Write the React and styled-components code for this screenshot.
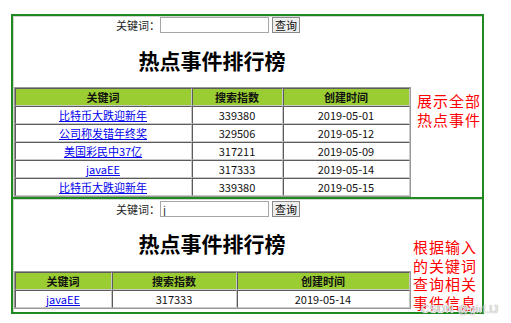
import React from 'react';
import styled, { createGlobalStyle } from 'styled-components';

const GlobalStyle = createGlobalStyle`
  body {
    margin: 0;
    background: #ffffff;
    font-family: "Noto Sans CJK SC", "Noto Sans", sans-serif;
  }
`;

const allEvents = [
  { keyword: '比特币大跌迎新年', index: 339380, date: '2019-05-01' },
  { keyword: '公司称发错年终奖', index: 329506, date: '2019-05-12' },
  { keyword: '美国彩民中37亿', index: 317211, date: '2019-05-09' },
  { keyword: 'javaEE', index: 317333, date: '2019-05-14' },
  { keyword: '比特币大跌迎新年', index: 339380, date: '2019-05-15' },
];

const searchResult = [{ keyword: 'javaEE', index: 317333, date: '2019-05-14' }];

const Page = styled.div`
  position: relative;
  width: 511px;
  height: 323px;
  padding: 14px 0 0 11px;
  box-sizing: border-box;
`;

const Panel = styled.div`
  width: 473px;
  box-sizing: border-box;
  border: 2px solid #1f8a1f;
  border-top-width: ${p => (p.$joined ? '0' : '2px')};
  box-shadow: inset 1px 1px 0 #d4d4d4;
  display: flex;
  padding-left: 1px;
`;

const Main = styled.div`
  width: 396px;
  display: flex;
  flex-direction: column;
  align-items: center;
`;

const SearchRow = styled.div`
  display: flex;
  align-items: center;
  margin-top: ${p => p.$top}px;
  margin-right: 8px;
  font-size: 11px;
  color: #222;
  height: 16px;
`;

const Label = styled.span`
  line-height: 16px;
`;

const Input = styled.input`
  width: 109px;
  height: 16px;
  box-sizing: border-box;
  border: 1px solid #a6a6a6;
  padding: 0 2px;
  font-size: 11px;
  font-family: inherit;
  color: #333;
  outline: none;
`;

const Button = styled.button`
  margin-left: 3px;
  width: 28px;
  height: 16px;
  box-sizing: border-box;
  padding: 0;
  border: 1px solid #8a8a8a;
  border-radius: 0;
  background: #efefef;
  font-size: 11px;
  font-family: inherit;
  line-height: 14px;
  color: #111;
`;

const Title = styled.h1`
  margin: ${p => p.$gap}px 0 ${p => p.$after}px;
  font-size: 21px;
  line-height: 26px;
  font-weight: bold;
  color: #000;
`;

const Table = styled.table`
  width: 395px;
  border-collapse: separate;
  border-spacing: 0;
  border: 1px solid #9a9a9a;
  font-size: 11px;
  table-layout: fixed;
`;

const Th = styled.th`
  background: #9acd32;
  font-weight: bold;
  color: #111;
  height: 16px;
  padding: 0;
  line-height: 16px;
  border: 1px solid;
  border-color: #5c5c5c #c8c8c8 #c8c8c8 #5c5c5c;
`;

const Td = styled.td`
  text-align: center;
  height: 16px;
  padding: 0;
  line-height: 16px;
  color: #111;
  border: 1px solid;
  border-color: #5c5c5c #c8c8c8 #c8c8c8 #5c5c5c;
`;

const Link = styled.a`
  color: #0000ee;
  text-decoration: underline;
`;

const Note = styled.div`
  margin: ${p => p.$top}px 0 0 ${p => p.$left}px;
  color: #ff0000;
  font-size: 15px;
  letter-spacing: 1px;
  line-height: 18.5px;
  white-space: pre-line;
`;

const Watermark = styled.div`
  position: absolute;
  left: 421px;
  top: 303px;
  font-family: "Liberation Sans", Arial, sans-serif;
  font-size: 11px;
  color: rgba(255, 255, 255, 0.85);
  text-shadow: 0 0 1px #999, 0 0 1px #999;
  letter-spacing: 0.5px;
`;

const EventTable = ({ rows, widths }) => (
  <Table>
    <colgroup>
      {widths.map((w, i) => (
        <col key={i} style={{ width: w }} />
      ))}
    </colgroup>
    <thead>
      <tr>
        <Th>关键词</Th>
        <Th>搜索指数</Th>
        <Th>创建时间</Th>
      </tr>
    </thead>
    <tbody>
      {rows.map((r, i) => (
        <tr key={i}>
          <Td>
            <Link href="#">{r.keyword}</Link>
          </Td>
          <Td>{r.index}</Td>
          <Td>{r.date}</Td>
        </tr>
      ))}
    </tbody>
  </Table>
);

const App = () => (
  <Page>
    <GlobalStyle />
    <Panel>
      <Main>
        <SearchRow $top={1}>
          <Label>关键词：</Label>
          <Input defaultValue="" />
          <Button>查询</Button>
        </SearchRow>
        <Title $gap={14} $after={14}>热点事件排行榜</Title>
        <EventTable rows={allEvents} widths={[177, 91, 127]} />
      </Main>
      <Note $top={76} $left={7}>{'展示全部\n热点事件'}</Note>
    </Panel>
    <Panel $joined>
      <Main>
        <SearchRow $top={2}>
          <Label>关键词：</Label>
          <Input defaultValue="j" />
          <Button>查询</Button>
        </SearchRow>
        <Title $gap={13} $after={15}>热点事件排行榜</Title>
        <EventTable rows={searchResult} widths={[97, 125, 173]} />
      </Main>
      <Note $top={39} $left={3}>{'根据输入\n的关键词\n查询相关\n事件信息'}</Note>
    </Panel>
    <Watermark>CSDN @girl.lJ</Watermark>
  </Page>
);

export default App;
